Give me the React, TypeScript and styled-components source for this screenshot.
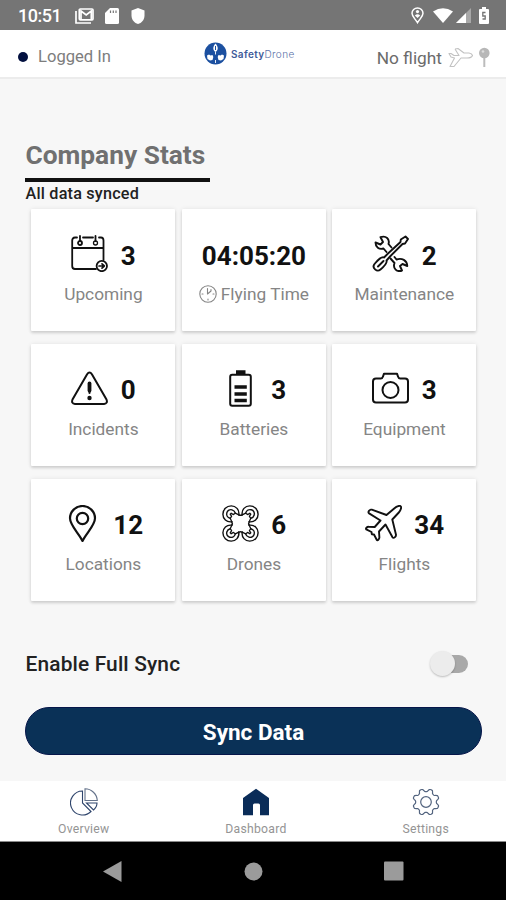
import React from 'react';
import styled, { createGlobalStyle } from 'styled-components';

const GlobalStyle = createGlobalStyle`
  * { box-sizing: border-box; }
  body { margin: 0; background: #f7f7f7; font-family: Roboto, "Liberation Sans", sans-serif; }
  svg { display: block; flex: none; }
`;

const Screen = styled.div`
  width: 506px;
  height: 900px;
  display: flex;
  flex-direction: column;
  background: #f7f7f7;
  overflow: hidden;
`;

const StatusBar = styled.div`
  height: 30px;
  flex: none;
  display: flex;
  align-items: center;
  justify-content: space-between;
  padding: 1px 17px 0 18px;
  background: #757575;
  color: #fff;
`;

const StatusGroup = styled.div<{ $gap: number }>`
  display: flex;
  align-items: center;
  gap: ${(p) => p.$gap}px;
`;

const Clock = styled.span`
  width: 43px;
  margin-right: 3px;
  font-size: 18px;
  line-height: 22px;
  font-weight: 500;
  letter-spacing: -0.5px;
`;

const Header = styled.header`
  height: 49px;
  flex: none;
  display: grid;
  grid-template-columns: 204px 1fr auto;
  padding: 0 15px 0 0;
  background: #fff;
  border-bottom: 2px solid #ececec;
`;

const LoginState = styled.div`
  display: flex;
  align-items: center;
  gap: 10px;
  padding: 6px 0 0 18px;
  color: #7d7d7d;
  font-size: 16.6px;
`;

const Dot = styled.i`
  width: 10px;
  height: 10px;
  border-radius: 50%;
  background: #02103f;
`;

const Brand = styled.div`
  display: flex;
  align-items: center;
  gap: 4px;
  color: #5b72a8;
  font-family: Inter, sans-serif;
  font-size: 10px;
  font-weight: 300;
  letter-spacing: 0.35px;
  b { color: #3f5c9a; font-weight: 600; }
`;

const FlightState = styled.div`
  display: flex;
  align-items: center;
  padding-top: 8px;
  color: #6b6b6b;
  font-size: 17.3px;
`;

const Main = styled.main`
  flex: 1;
  display: flex;
  flex-direction: column;
  padding: 59px 24px 0 25px;
`;

const Title = styled.h1`
  width: 185px;
  height: 44px;
  margin: 0;
  padding: 2px 0 0 0.5px;
  border-bottom: 4px solid #111;
  color: #707070;
  font-size: 26.3px;
  line-height: 31px;
  font-weight: 700;
  white-space: nowrap;
`;

const SyncNote = styled.p`
  margin: 0;
  height: 27px;
  padding: 2px 0 0 0.5px;
  color: #222;
  font-size: 16.2px;
  line-height: 20px;
  font-weight: 500;
  letter-spacing: 0.2px;
`;

const StatGrid = styled.div`
  display: grid;
  grid-template-columns: repeat(3, 144px);
  grid-auto-rows: 122px;
  column-gap: 6.5px;
  row-gap: 12.8px;
  margin: 0 0 0 6.4px;
`;

const Card = styled.section`
  display: flex;
  flex-direction: column;
  align-items: center;
  padding-top: 26px;
  background: #fff;
  border-radius: 1px;
  box-shadow: 0 2px 3px rgba(0, 0, 0, 0.14), 0 0 5px rgba(0, 0, 0, 0.08);
`;

const Figure = styled.div`
  height: 37px;
  display: flex;
  align-items: center;
  gap: 12.5px;
  color: #111;
`;

const Value = styled.span<{ $wide?: boolean }>`
  padding-top: 4px;
  font-size: 26px;
  line-height: 30px;
  font-weight: 700;
`;

const Label = styled.div`
  display: flex;
  align-items: center;
  gap: 4px;
  margin-top: 10px;
  color: #858585;
  font-size: 17.3px;
  line-height: 24px;
`;

const SyncRow = styled.div`
  display: flex;
  align-items: center;
  justify-content: space-between;
  height: 30px;
  margin-top: 48px;
  padding: 0 14px 0 0.5px;
  color: #222;
  font-size: 20.9px;
  font-weight: 500;
  letter-spacing: 0.15px;
`;

const Track = styled.span`
  display: flex;
  align-items: center;
  width: 34px;
  height: 18px;
  border-radius: 9px;
  background: #a9a9a9;
`;

const Thumb = styled.span`
  width: 25px;
  height: 25px;
  flex: none;
  margin-left: -4px;
  border-radius: 50%;
  background: #ececec;
  box-shadow: 0 1px 2px rgba(0, 0, 0, 0.24);
`;

const SyncButton = styled.button`
  height: 48px;
  margin: 28px 0 0;
  padding: 3px 0 0;
  border: 1px solid #06164a;
  border-radius: 24px;
  background: #0a3157;
  color: #fff;
  font-family: inherit;
  font-size: 22.5px;
  font-weight: 700;
`;

const TabBar = styled.nav`
  height: 61px;
  flex: none;
  display: flex;
  justify-content: space-between;
  padding: 7px 57px 0 58px;
  background: #fff;
  border-bottom: 1px solid #8a8a8a;
`;

const Tab = styled.div`
  display: flex;
  flex-direction: column;
  align-items: center;
  gap: 5px;
  color: #949494;
  font-size: 12.2px;
  line-height: 16px;
  letter-spacing: 0.25px;
`;

const SystemBar = styled.div`
  height: 58px;
  flex: none;
  display: flex;
  align-items: center;
  justify-content: space-between;
  padding: 0 102px 0 103px;
  background: #000;
`;

const line = { fill: 'none', stroke: 'currentColor', strokeWidth: 1.8, strokeLinecap: 'round', strokeLinejoin: 'round' } as const;

const StatIcon = ({ children, width = 1.8 }: { children: React.ReactNode; width?: number }) => (
  <svg width="37" height="37" viewBox="0 0 37 37" {...line} strokeWidth={width}>{children}</svg>
);

const CalendarIcon = () => (
  <StatIcon>
    <path d="M6 2.5H4Q1.2 2.5 1.2 5.5V31Q1.2 34 4 34H25M12 2.5H22M28 2.5H30Q32.5 2.5 32.5 5.5V25M1.2 13H32.5" />
    <path d="M9 1V6M24.5 1V6" />
    <circle cx="9" cy="8" r="2" /><circle cx="24.5" cy="8" r="2" strokeWidth="1.3" />
    <circle cx="30.8" cy="31" r="5.2" />
    <path d="M28 31H33M31 28.9L33.3 31L31 33.1" strokeWidth="1.7" />
  </StatIcon>
);

const ToolsIcon = () => (
  <StatIcon width={1.9}>
    <path d="M3.5 7.5L8.5 9.5L11 7L8.5 2.2C14 .2 18 4 16.5 9L19.5 12.5M3.5 7.5C3.5 12 7 15 11.5 13.5L14.5 17M22.5 22L24.5 24.5C30 22.5 35 25.5 35.3 31L30.5 29L28 31L30 35.5C25 37.5 20.5 33.5 22.5 28L18.5 23.5" />
    <path d="M16 18.5L28.5 7L28.8 4.5L33.5 1.5L36 4L33 8.5L30.5 9L18.5 21L14.5 25.5C15.5 28 12 31.5 8.5 34.5C5 37.5 -.5 33 2.5 29C5.5 25.5 9 21 12 22.5ZM6 31.5L11.5 26" />
  </StatIcon>
);

const WarningIcon = () => (
  <StatIcon width={2}>
    <path d="M16.1 4.2Q18.5.6 20.9 4.2L35.5 29.5Q37 33.5 33 34H4Q0 33.5 1.5 29.5Z" />
    <path d="M18.5 13.5V20.5" strokeWidth="3.8" />
    <path d="M18.5 22V23" strokeWidth="2" />
    <circle cx="18.5" cy="28" r="2.2" fill="currentColor" stroke="none" />
  </StatIcon>
);

const BatteryIcon = () => (
  <StatIcon width={2}>
    <rect x="8.2" y="4.7" width="20.6" height="31" rx="2" />
    <path d="M15 4V1.2H22.5V4" fill="currentColor" strokeLinejoin="miter" />
    <path d="M12.5 17H24.8M12.5 24H24.8M12.5 30.5H24.8" strokeWidth="3.5" strokeLinecap="butt" />
  </StatIcon>
);

const CameraIcon = () => (
  <StatIcon width={2}>
    <path d="M4 8.5H8.8Q10.4 8.5 11 6.5L12 3.7H25L26 6.5Q26.6 8.5 28.2 8.5H33Q36 8.5 36 11.5V29.5Q36 32.5 33 32.5H4Q1 32.5 1 29.5V11.5Q1 8.5 4 8.5Z" />
    <circle cx="18.5" cy="20" r="8" />
  </StatIcon>
);

const PinIcon = () => (
  <StatIcon width={2.2}>
    <path d="M18.5 36C15 28.5 6 20.5 6 13.3A12.5 12.3 0 0 1 31 13.3C31 20.5 22 28.5 18.5 36Z" />
    <circle cx="18.5" cy="13.5" r="5.7" />
  </StatIcon>
);

const DroneIcon = () => (
  <StatIcon width={1.4}>
    {[0, 90, 180, 270].map((angle) => (
      <g key={angle} transform={`rotate(${angle} 18.5 18.5)`}>
        <path d="M16.8 9.8C17.6 4.6 13.8 .9 9.2 .9C4.6 .9 .9 4.6 .9 9.2C.9 13.8 4.6 17.6 9.8 16.8" />
        <path d="M8.2 13.3C5.3 12.6 4.3 10 4.8 7.8C5.4 5.2 8 4.2 10 4.8C12.1 5.4 13 6.7 13.3 8.2" />
        <path d="M8.2 13.3L9.8 16.8M13.3 8.2L16.8 9.8M8.2 13.3L9.6 11.4L8.2 9.2L9.2 8.2L11.4 9.6L13.3 8.2" strokeWidth="1.3" />
        <path d="M9.8 16.8Q10.8 18.5 9.8 20.2" />
      </g>
    ))}
  </StatIcon>
);

const PlaneIcon = () => (
  <StatIcon width={1.9}>
    <path d="M21.5 10L29.5 3.2C32 1 34.8.4 35.7 1.3C36.6 2.2 36 5 33.8 7.5L27.3 14.5L31 29.7C31.2 31.7 28.6 34 27.5 32.2L20.5 19.5L14 26.5L14.4 32.5C14.3 34 12.5 36.2 11.7 34.7L9 29.5L6.8 29.2L6.5 27L1.3 24.4C.2 23.5 2 21.7 3.7 21.8L9.7 22L15.5 15.5L4.1 8.4C2.2 7 4.7 4.2 6.8 4.7Z" />
  </StatIcon>
);

const ClockIcon = () => (
  <svg width="18" height="18" viewBox="0 0 18 18" {...line} strokeWidth="1.1">
    <circle cx="9" cy="9" r="8.2" /><path d="M8.5 3.5V9L12 6V4.5M9 14V15M3 9H4M14 9H15" />
  </svg>
);

const stats = [
  { label: 'Upcoming', value: '3', icon: <CalendarIcon /> },
  { label: 'Flying Time', value: '04:05:20', labelIcon: <ClockIcon /> },
  { label: 'Maintenance', value: '2', icon: <ToolsIcon /> },
  { label: 'Incidents', value: '0', icon: <WarningIcon /> },
  { label: 'Batteries', value: '3', icon: <BatteryIcon /> },
  { label: 'Equipment', value: '3', icon: <CameraIcon /> },
  { label: 'Locations', value: '12', icon: <PinIcon /> },
  { label: 'Drones', value: '6', icon: <DroneIcon /> },
  { label: 'Flights', value: '34', icon: <PlaneIcon /> },
];

const LogoMark = () => (
  <svg width="23" height="23" viewBox="0 0 23 23">
    <circle cx="11.5" cy="11.5" r="11" fill="#1c50a0" />
    <path d="M11.5 1.5C14.5 5 14.5 8 11.5 10C8.5 8 8.5 5 11.5 1.5Z" fill="#fff" />
    <path d="M3 13.5L5 12.5L6.5 13.5L8.5 13L9.3 15L8.5 18L6 18.5L3.5 17ZM20 13.5L18 12.5L16.5 13.5L14.5 13L13.7 15L14.5 18L17 18.5L19.5 17Z" fill="#fff" />
    <path d="M11.5 10V12.5M11.5 18V21" stroke="#fff" strokeWidth=".9" />
    <path d="M11.5 4V8" stroke="#1c50a0" />
  </svg>
);

const gearPath = Array.from({ length: 96 }, (_, i) => {
  const angle = (i / 96) * Math.PI * 2;
  const radius = 11.8 + 1.5 * Math.tanh(2 * Math.cos(angle * 8 + Math.PI));
  return `${i ? 'L' : 'M'}${(14 + radius * Math.cos(angle)).toFixed(2)} ${(14 + radius * Math.sin(angle)).toFixed(2)}`;
}).join('') + 'Z';

export default function App() {
  return (
    <>
      <GlobalStyle />
      <Screen>
        <StatusBar>
          <StatusGroup $gap={11}>
            <Clock>10:51</Clock>
            <svg width="19" height="16" viewBox="0 0 19 16" fill="none" stroke="#fff" strokeWidth="1.7">
              <path d="M1 3V15H16" /><rect x="4.3" y="1" width="13.7" height="10.8" rx="1" /><path d="M6 12V3L11.2 7L16.3 3V12" />
            </svg>
            <svg width="14" height="16" viewBox="0 0 14 16">
              <path d="M5 0H12.5Q14 0 14 1.5V14.5Q14 16 12.5 16H1.5Q0 16 0 14.5V5Z" fill="#fff" />
              <path d="M5.5 2.5V5M8.3 2.5V5M11 2.5V5" stroke="#757575" strokeWidth="1.2" />
            </svg>
            <svg width="16" height="16" viewBox="0 0 16 16"><path d="M8 0L14.5 2.5V7.5C14.5 12 11.5 15 8 16C4.5 15 1.5 12 1.5 7.5V2.5Z" fill="#fff" /></svg>
          </StatusGroup>
          <StatusGroup $gap={3}>
            <svg width="19" height="17" viewBox="0 0 19 17" fill="none" stroke="#fff">
              <path d="M6.5 15.7C4 11.5 1 9.5 1 6.3A5.5 5.4 0 0 1 12 6.3C12 9.5 9 11.5 6.5 15.7Z" strokeWidth="1.5" />
              <circle cx="6.5" cy="4.6" r="1.6" fill="#fff" stroke="none" /><path d="M3.8 8.5Q6.5 5.8 9.2 8.5L6.5 11Z" fill="#fff" stroke="none" />
            </svg>
            <svg width="20" height="15" viewBox="0 0 20 15"><path d="M0 3.5Q10-3 20 3.5L10 15Z" fill="#fff" /></svg>
            <svg width="20" height="15" viewBox="0 0 20 15"><path d="M0 15L15 0V15Z" fill="#a8a8a8" /><path d="M0 15L10 5V15Z" fill="#fff" /></svg>
            <svg width="10" height="17" viewBox="0 0 10 17">
              <path d="M3 0H7V2H9Q10 2 10 3V16Q10 17 9 17H1Q0 17 0 16V3Q0 2 1 2H3Z" fill="#fff" /><path d="M6.5 5.5H3.8V9H6.2V12H3.5" fill="none" stroke="#757575" strokeWidth="1.3" />
            </svg>
          </StatusGroup>
        </StatusBar>
        <Header>
          <LoginState><Dot />Logged In</LoginState>
          <Brand><LogoMark /><span><b>Safety</b>Drone</span></Brand>
          <FlightState>
            No flight
            <svg width="34" height="24" viewBox="0 0 34 24" fill="none" stroke="#c2c2c2" strokeWidth="1.1" strokeLinejoin="round">
              <path d="M13 3L16 2.5L22 7H27Q30 7.5 30.5 9.5Q29.5 12 25 12H19L12 20.5H8L12.5 12L9 11L7 7.5L9 7.5L12 9.5H17L13 3" />
            </svg>
            <svg width="15" height="22" viewBox="0 0 15 22">
              <path d="M8.3 11V20" stroke="#bcbcbc" strokeWidth="2" /><circle cx="8.3" cy="6" r="5.3" fill="#b7b7b7" /><circle cx="7" cy="4.5" r="1.3" fill="#ddd" />
            </svg>
          </FlightState>
        </Header>
        <Main>
          <Title>Company Stats</Title>
          <SyncNote>All data synced</SyncNote>
          <StatGrid>
            {stats.map((s) => (
              <Card key={s.label}>
                <Figure>{s.icon}<Value>{s.value}</Value></Figure>
                <Label>{s.labelIcon}{s.label}</Label>
              </Card>
            ))}
          </StatGrid>
          <SyncRow>Enable Full Sync<Track role="switch" aria-checked="false"><Thumb /></Track></SyncRow>
          <SyncButton>Sync Data</SyncButton>
        </Main>
        <TabBar>
          <Tab>
            <svg width="28" height="28" viewBox="0 0 28 28" fill="none" stroke="#2f456c" strokeWidth="1.1">
              <path d="M12.5 3A12 12 0 1 0 21 23.5L12.5 15Z" />
              <path d="M15 .8A12.5 12.5 0 0 1 27.3 12.5H15Z" stroke="#65738b" />
              <path d="M16.5 15H27Q27 19 23.5 22Z" />
            </svg>
            Overview
          </Tab>
          <Tab>
            <svg width="28" height="28" viewBox="0 0 28 28"><path d="M14 .8L27 10V27.3H18V17Q18 15.5 16.5 15.5H12.5Q11 15.5 11 17V27.3H1V10Z" fill="#0a2c58" /></svg>
            Dashboard
          </Tab>
          <Tab>
            <svg width="28" height="28" viewBox="0 0 28 28" fill="none" stroke="#53647f" strokeWidth="1.2" strokeLinejoin="round">
              <path d={gearPath} /><circle cx="14" cy="14" r="5.3" />
            </svg>
            Settings
          </Tab>
        </TabBar>
        <SystemBar>
          <svg width="19" height="21" viewBox="0 0 19 21"><path d="M0 10.5L18.5 0V21Z" fill="#9b9b9b" /></svg>
          <svg width="19" height="19" viewBox="0 0 19 19"><circle cx="9.5" cy="9.5" r="9" fill="#9b9b9b" /></svg>
          <svg width="20" height="20" viewBox="0 0 20 20"><rect width="19.5" height="19" y=".5" rx="1" fill="#9b9b9b" /></svg>
        </SystemBar>
      </Screen>
    </>
  );
}
